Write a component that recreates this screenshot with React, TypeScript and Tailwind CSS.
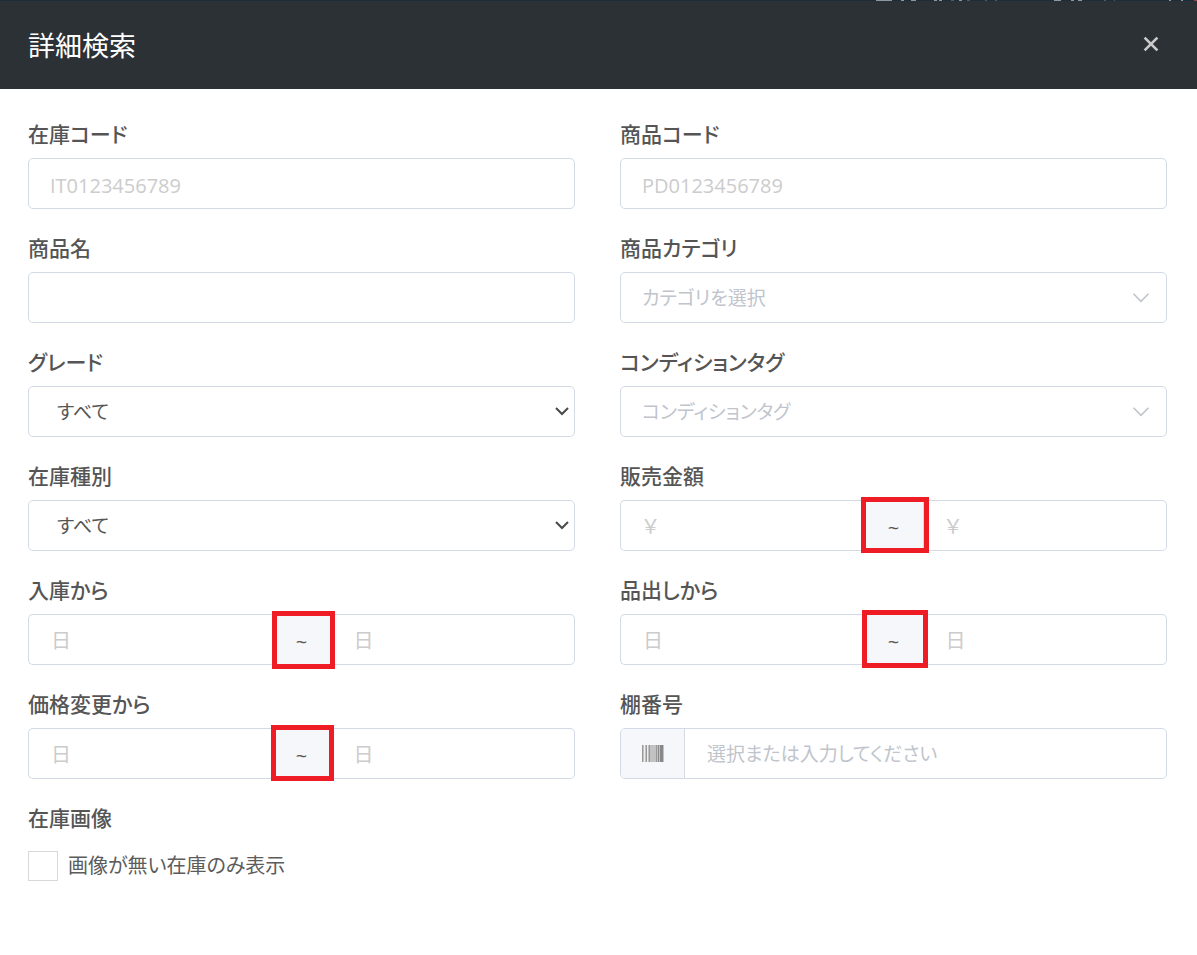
import type { ReactNode } from 'react';

const control =
  'w-full h-[51px] rounded-[5px] border border-[#d3dae6] bg-white px-[21px] outline-none placeholder:text-[#ccc]';

function Field({ id, label, children }: { id: string; label: string; children: ReactNode }) {
  return (
    <div className="min-w-0">
      <label htmlFor={id} className="mb-2 block text-[21px] leading-[31px] font-medium text-[#555]">
        {label}
      </label>
      {children}
    </div>
  );
}

function TextField({ id, label, placeholder }: { id: string; label: string; placeholder?: string }) {
  return (
    <Field id={id} label={label}>
      <input id={id} type="text" placeholder={placeholder} className={`${control} pt-1 text-xl text-[#555]`} />
    </Field>
  );
}

function GradeSelect({ id, label }: { id: string; label: string }) {
  return (
    <Field id={id} label={label}>
      <div className="relative">
        <select id={id} className={`${control} appearance-none pt-[2px] pl-7 text-[19px] text-[#555]`}>
          <option>すべて</option>
        </select>
        <svg className="pointer-events-none absolute top-[19px] right-[5px] h-3 w-4" viewBox="0 0 16 12" fill="none">
          <path d="M2 3l6 6 6-6" stroke="#4a4a4a" strokeWidth="2" />
        </svg>
      </div>
    </Field>
  );
}

function TagSelect({ id, label, placeholder }: { id: string; label: string; placeholder: string }) {
  return (
    <Field id={id} label={label}>
      <div className="relative">
        <select id={id} className={`${control} appearance-none pt-[2px] text-[19px] text-[#c0c4cc]`}>
          <option>{placeholder}</option>
        </select>
        <svg className="pointer-events-none absolute top-5 right-[17px] h-3 w-[18px]" viewBox="0 0 18 12" fill="none">
          <path d="M1.5 1.8L9 9.3l7.5-7.5" stroke="#c0c4cc" strokeWidth="1.6" />
        </svg>
      </div>
    </Field>
  );
}

type RangeProps = { id: string; label: string; unit: string; frame: string };

function RangeField({ id, label, unit, frame }: RangeProps) {
  return (
    <Field id={id} label={label}>
      <div className="flex h-[51px]">
        <input
          id={id}
          type="text"
          placeholder={unit}
          className="min-w-0 flex-1 rounded-l-[5px] border border-r-0 border-[#d3dae6] px-[22px] pt-[2px] text-xl text-[#555] outline-none placeholder:text-[#ccc]"
        />
        <span className="relative flex w-[60px] items-center justify-center border border-[#d3dae6] bg-[#f5f7fa] pt-1 text-xl text-[#555]">
          ~
          <span className={`pointer-events-none absolute border-5 border-[#ee1c25] ${frame}`} />
        </span>
        <input
          type="text"
          aria-label={label}
          placeholder={unit}
          className="min-w-0 flex-1 rounded-r-[5px] border border-l-0 border-[#d3dae6] px-[22px] pt-[2px] text-xl text-[#555] outline-none placeholder:text-[#ccc]"
        />
      </div>
    </Field>
  );
}

function Barcode() {
  return (
    <svg className="h-[17px] w-[22px]" viewBox="0 0 22 17">
      <rect width="22" height="17" fill="#c2c2c2" />
      <path d="M2 0h1v17H2zM5 0h1v17H5z" fill="#eee" />
      <path d="M0 0h1v17H0zM4 0h1v17H4zM7 0h1v17H7zM14 0h1v17h-1z" fill="#999" />
      <path d="M16 0h1v17h-1zM18 0h3v17h-3z" fill="#888" />
    </svg>
  );
}

export default function App() {
  return (
    <div className="min-h-screen bg-white font-['Open_Sans','Noto_Sans_CJK_JP',sans-serif] [font-feature-settings:'palt']">
      {/* sliver of the page behind the dialog */}
      <div className="flex h-px justify-end bg-[#1b2c3b]">
        <svg className="h-px w-[337px]" viewBox="0 0 337 1" shapeRendering="crispEdges">
          <path
            d="M16 0h16v1H16zM41 0h3v1h-3zM51 0h5v1h-5zM74 0h3v1h-3zM79 0h3v1h-3zM99 0h3v1h-3zM194 0h7v1h-7zM211 0h3v1h-3zM218 0h4v1h-4zM309 0h2v1h-2zM321 0h2v1h-2z"
            fill="#8a979f"
          />
          <path d="M91 0h3v1h-3zM107 0h3v1h-3zM125 0h2v1h-2zM135 0h2v1h-2zM244 0h2v1h-2zM254 0h1v1h-1z" fill="#4c5b66" />
          <path d="M334 0h3v1h-3z" fill="#a04049" />
        </svg>
      </div>
      <header className="flex h-[88px] items-center justify-between bg-[#2c3135] pr-[38px] pl-7">
        <h1 className="pt-[2px] text-[27px] text-white">詳細検索</h1>
        <button type="button" aria-label="閉じる" className="mb-[2px]">
          <svg className="h-4 w-4" viewBox="0 0 16 16" fill="none">
            <path d="M1.6 1.6l12.8 12.8M14.4 1.6L1.6 14.4" stroke="#c8cacb" strokeWidth="2.7" />
          </svg>
        </button>
      </header>

      <form className="grid grid-cols-2 gap-x-[45px] gap-y-6 pt-[30px] pr-[30px] pb-8 pl-7">
        <TextField id="stock-code" label="在庫コード" placeholder="IT0123456789" />
        <TextField id="product-code" label="商品コード" placeholder="PD0123456789" />
        <TextField id="product-name" label="商品名" />
        <TagSelect id="category" label="商品カテゴリ" placeholder="カテゴリを選択" />
        <GradeSelect id="grade" label="グレード" />
        <TagSelect id="condition" label="コンディションタグ" placeholder="コンディションタグ" />
        <GradeSelect id="stock-type" label="在庫種別" />
        <RangeField id="price" label="販売金額" unit="￥" frame="-top-1 -right-[6px] -bottom-[3px] -left-1" />
        <RangeField id="stocked" label="入庫から" unit="日" frame="-top-1 -right-1 -bottom-[5px] -left-[1px]" />
        <RangeField id="displayed" label="品出しから" unit="日" frame="-top-[5px] -right-[5px] -bottom-1 -left-[3px]" />
        <RangeField id="repriced" label="価格変更から" unit="日" frame="-top-1 -right-[3px] -bottom-[3px] -left-[2px]" />
        <Field id="shelf" label="棚番号">
          <div className="flex h-[51px] overflow-hidden rounded-[5px] border border-[#d3dae6]">
            <span className="flex w-16 items-center justify-center border-r border-[#d3dae6] bg-[#f5f7fa]">
              <Barcode />
            </span>
            <input
              id="shelf"
              type="text"
              placeholder="選択または入力してください"
              className="min-w-0 flex-1 px-[22px] pt-[2px] text-[19px] text-[#555] outline-none placeholder:text-[#c0c4cc]"
            />
          </div>
        </Field>
        <fieldset>
          <legend className="mb-[17px] text-[21px] leading-[31px] font-medium text-[#555]">在庫画像</legend>
          <label className="flex items-center gap-[10px] text-xl leading-[30px] text-[#5c5c5c]">
            <input type="checkbox" className="h-[30px] w-[30px] appearance-none border border-[#d8d8d8] bg-white" />
            画像が無い在庫のみ表示
          </label>
        </fieldset>
      </form>
    </div>
  );
}
